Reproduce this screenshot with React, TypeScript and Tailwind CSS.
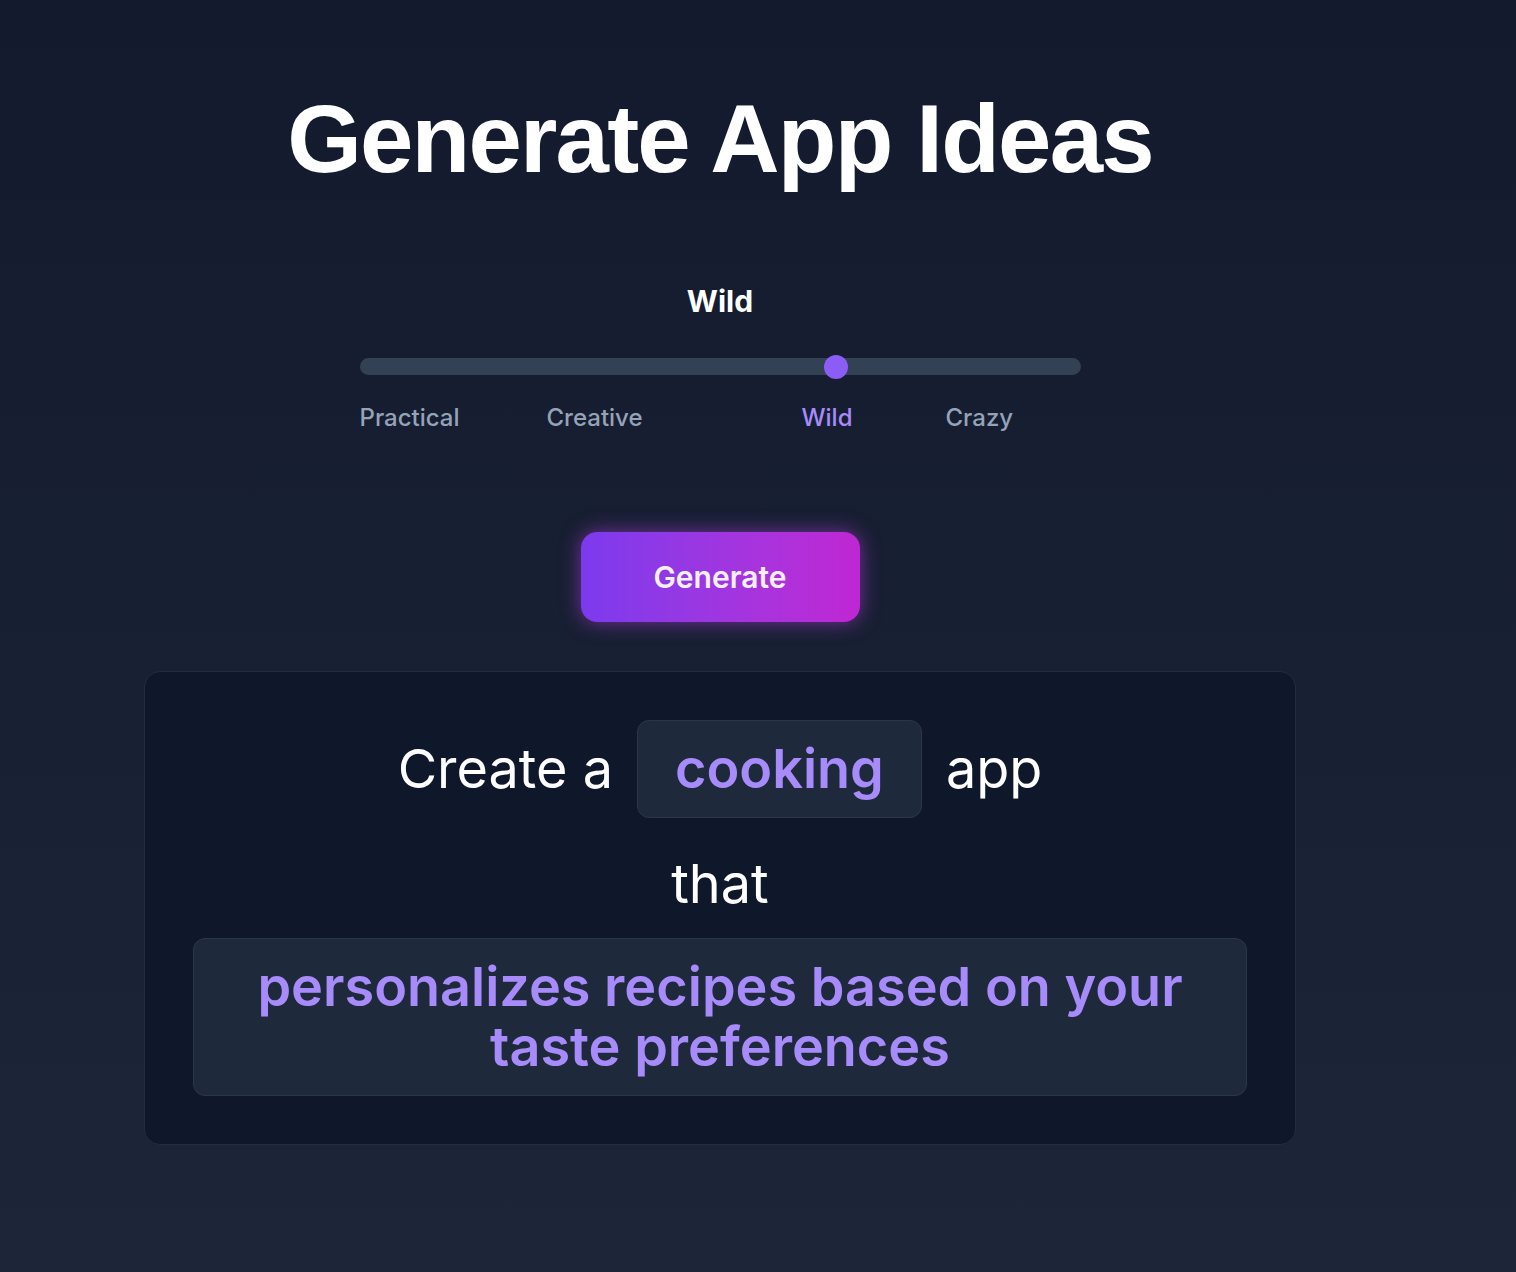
import { useState } from "react";

const levels = ["Practical", "Creative", "Wild", "Crazy"];

function App() {
  const [level, setLevel] = useState(2);

  return (
    <div className="min-h-[1272px] w-full bg-gradient-to-b from-[#131a2d] to-[#1d2538] font-['Inter',sans-serif] text-white">
      <div className="flex max-w-[1440px] flex-col items-center pt-[91px] pb-16">
        <h1 className="font-['Liberation_Sans',Arial,sans-serif] text-[96px] leading-none font-bold tracking-[-1.8px]">
          Generate App Ideas
        </h1>

        <div className="mt-[96px] text-[30px] leading-[36px] font-bold">{levels[level]}</div>

        <div className="mt-[39px] w-[721px]">
          <div className="relative h-[17px] rounded-full bg-[#334155]">
            <div
              className="absolute top-1/2 h-6 w-6 -translate-y-1/2 cursor-pointer rounded-full bg-[#8b5cf6]"
              style={{ left: `${(level / 3) * (721 - 24)}px` }}
            />
          </div>
          <div className="mt-[27px] grid grid-cols-[187px_255px_144px_auto] text-[24px] leading-8 font-medium">
            {levels.map((l, i) => (
              <button
                key={l}
                onClick={() => setLevel(i)}
                className={"text-left " + (i === level ? "text-[#a78bfa]" : "text-[#94a3b8]")}
              >
                {l}
              </button>
            ))}
          </div>
        </div>

        <button className="mt-[98px] h-[90px] w-[279px] rounded-2xl bg-gradient-to-r from-[#7c3aed] to-[#c026d3] text-[30px] font-semibold text-[#f5f0ff] shadow-[0_0_20px_rgba(180,60,230,0.6)]">
          Generate
        </button>

        <div className="mt-[49px] flex w-[1152px] flex-col items-center rounded-2xl border border-[#232c40] bg-[#0f172a] p-12">
          <div className="flex items-center gap-6 text-[54px] leading-none">
            <span>Create a</span>
            <span className="rounded-xl border border-[#2c3550] bg-[#1e293b] px-[37px] py-[21px] font-semibold text-[#a78bfa]">
              cooking
            </span>
            <span>app</span>
          </div>
          <div className="mt-[39px] text-[54px] leading-none">that</div>
          <div className="mt-[27px] w-full rounded-xl border border-[#2c3550] bg-[#1e293b] px-8 py-[18px] text-center text-[54px] leading-[60px] font-semibold text-[#a78bfa]">
            personalizes recipes based on your taste preferences
          </div>
        </div>
      </div>
    </div>
  );
}

export default App;
